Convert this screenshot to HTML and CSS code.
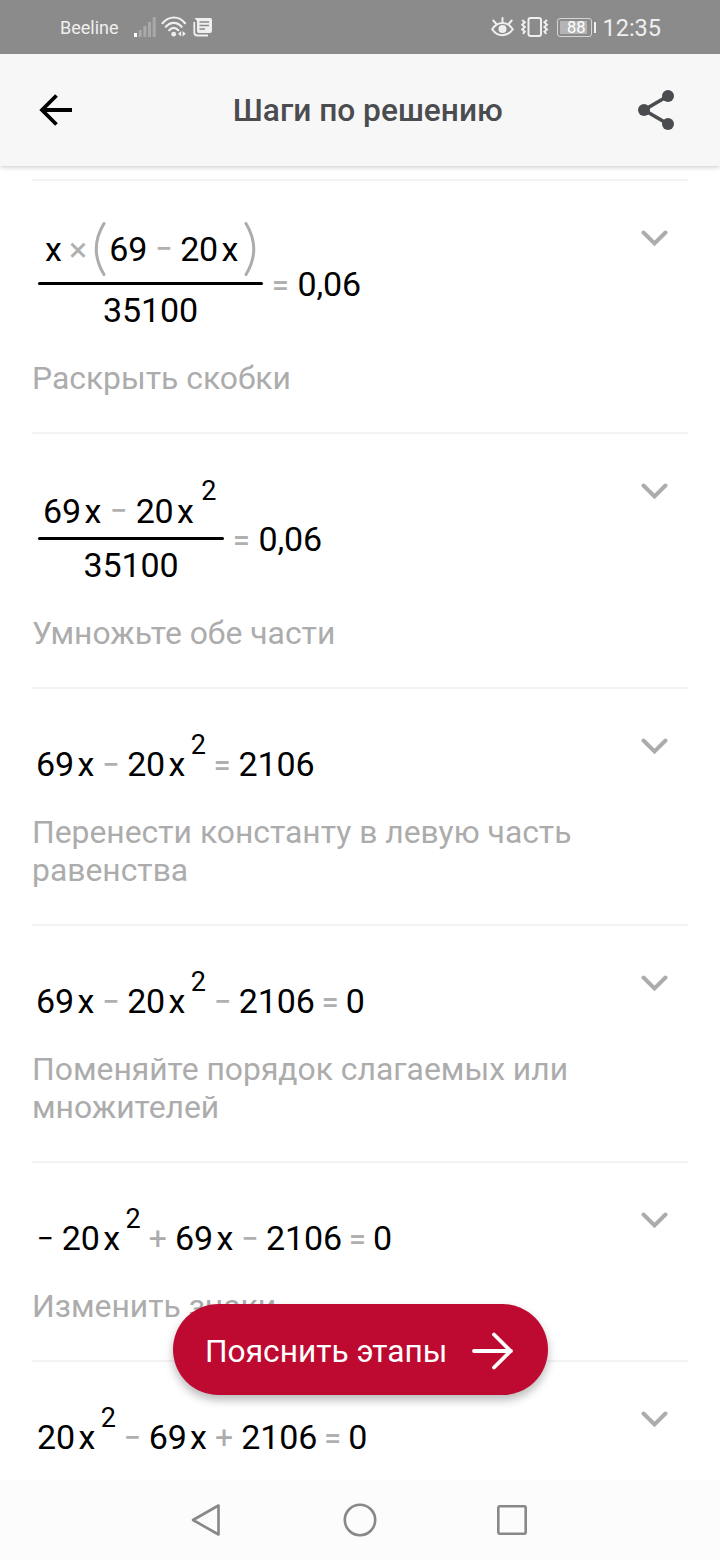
FILE: index.html
```
<!DOCTYPE html>
<html lang="ru">
<head>
    <meta charset="UTF-8">
    <meta name="viewport" content="width=device-width, initial-scale=1.0">
    <title>Шаги по решению</title>
    <link rel="stylesheet" href="styles.css">
</head>
<body>
    <div class="status-bar">
        <span class="carrier">Beeline</span>
        <svg class="signal" width="22" height="20" viewBox="0 0 22 20">
            <rect x="0" y="16" width="3" height="4" fill="#fff"/>
            <g fill="#a9a9a9">
                <rect x="4.7" y="13" width="3" height="7"/>
                <rect x="9.4" y="9" width="3" height="11"/>
                <rect x="14" y="5" width="3" height="15"/>
                <rect x="18.7" y="0" width="3" height="20"/>
            </g>
        </svg>
        <svg class="wifi" width="26" height="22" viewBox="0 0 26 22">
            <g fill="none" stroke="#efefef" stroke-width="2.2" stroke-linecap="round">
                <path d="M1.5 7.2C8 -.4 18 -.4 24 7.2"/>
                <path d="M4.8 10.8C9.5 5.6 16 5.6 20.7 10.8"/>
                <path d="M8.2 14.2C11 11.2 14.5 11.2 17.3 14.2"/>
            </g>
            <circle cx="12.7" cy="18.2" r="2.4" fill="#efefef"/>
            <path d="M20.2 15v5.6L17 17.8zM21.6 15v5.6l3.2-2.8z" fill="#efefef"/>
        </svg>
        <svg class="news" width="20" height="20" viewBox="0 0 20 20">
            <path d="M1.3 5v10.5a3 3 0 0 0 3 3H15" fill="none" stroke="#efefef" stroke-width="1.8"/>
            <path d="M1.5 1H17.5a1.5 1.5 0 0 1 1.5 1.5V14a2 2 0 0 1-2 2H6a2 2 0 0 1-2-2V4z" fill="#efefef"/>
            <path d="M6.5 5H16M6.5 8.5H16M6.5 12H12" stroke="#8b8b8b" stroke-width="1.5"/>
        </svg>
        <div class="status-right">
            <svg class="eye" width="23" height="20" viewBox="0 0 23 20">
                <g fill="none" stroke="#efefef" stroke-width="2" stroke-linecap="round">
                    <path d="M1.2 12.2C6.5 4 16.5 4 21.8 12.2C16.5 20.2 6.5 20.2 1.2 12.2z"/>
                    <path d="M11.5 5V1M5.3 7L2.3 3.5M17.7 7L20.7 3.5"/>
                </g>
                <circle cx="11.5" cy="12" r="4" fill="#efefef"/>
            </svg>
            <svg class="vibrate" width="28" height="20" viewBox="0 0 28 20">
                <g fill="none" stroke="#efefef" stroke-width="2">
                    <rect x="7.5" y="1" width="12.5" height="18" rx="2"/>
                    <path d="M1.2 3l2.6 2.3L1.2 7.7l2.6 2.4-2.6 2.3 2.6 2.3L2 17M26 3l-2.6 2.3L26 7.7l-2.6 2.4L26 12.4l-2.6 2.3L25.2 17"/>
                </g>
            </svg>
            <div class="battery"><span>88</span></div>
            <div class="battery-tip"></div>
            <span class="time">12:35</span>
        </div>
    </div>

    <div class="header">
        <svg width="34" height="34" viewBox="0 0 34 34">
            <path d="M17.5 2.5L3 17L17.5 31.5M3 17H33" fill="none" stroke="#000" stroke-width="3.8"/>
        </svg>
        <h1>Шаги по решению</h1>
        <svg width="38" height="42" viewBox="0 0 38 42">
            <path d="M31 7L7 21L31 35" fill="none" stroke="#4b4c50" stroke-width="3.6"/>
            <g fill="#4b4c50">
                <circle cx="31" cy="7" r="6"/>
                <circle cx="7" cy="21" r="6"/>
                <circle cx="31" cy="35" r="6"/>
            </g>
        </svg>
    </div>

    <div class="steps">
        <div class="step brackets">
            <div class="step-body">
                <div class="math fraction-row">
                    <div class="fraction">
                        <div class="numerator">
                            <span>x</span><span class="op times">×</span><svg class="paren" width="13" height="54" viewBox="0 0 13 54"><path d="M10 1.5Q-5.5 27 10 52.5" fill="none" stroke="#acacac" stroke-width="3" stroke-linecap="round"/></svg><span>69</span><span class="op minus">−</span><span>20</span><span class="var">x</span><svg class="paren close" width="13" height="54" viewBox="0 0 13 54"><path d="M3 1.5Q18.5 27 3 52.5" fill="none" stroke="#acacac" stroke-width="3" stroke-linecap="round"/></svg>
                        </div>
                        <div class="bar"></div>
                        <div class="denominator">35100</div>
                    </div>
                    <div class="result"><span class="op equals">=</span>0,06</div>
                </div>
                <p class="label">Раскрыть скобки</p>
            </div>
            <svg class="chevron" width="28" height="20" viewBox="0 0 28 20"><path d="M2.5 4.5L13.5 15.5L24.5 4.5"/></svg>
        </div>

        <div class="step power">
            <div class="step-body">
                <div class="math fraction-row">
                    <div class="fraction">
                        <div class="numerator">
                            <span>69</span><span class="var">x</span><span class="op minus">−</span><span>20</span><span class="var">x</span><sup>2</sup>
                        </div>
                        <div class="bar"></div>
                        <div class="denominator">35100</div>
                    </div>
                    <div class="result"><span class="op equals">=</span>0,06</div>
                </div>
                <p class="label">Умножьте обе части</p>
            </div>
            <svg class="chevron" width="28" height="20" viewBox="0 0 28 20"><path d="M2.5 4.5L13.5 15.5L24.5 4.5"/></svg>
        </div>

        <div class="step">
            <div class="step-body">
                <div class="math">
                    <span>69</span><span class="var">x</span><span class="op minus">−</span><span>20</span><span class="var">x</span><sup>2</sup><span class="op equals">=</span><span>2106</span>
                </div>
                <p class="label">Перенести константу в левую часть равенства</p>
            </div>
            <svg class="chevron" width="28" height="20" viewBox="0 0 28 20"><path d="M2.5 4.5L13.5 15.5L24.5 4.5"/></svg>
        </div>

        <div class="step">
            <div class="step-body">
                <div class="math">
                    <span>69</span><span class="var">x</span><span class="op minus">−</span><span>20</span><span class="var">x</span><sup>2</sup><span class="op minus">−</span><span>2106</span><span class="op equals">=</span><span>0</span>
                </div>
                <p class="label">Поменяйте порядок слагаемых или множителей</p>
            </div>
            <svg class="chevron" width="28" height="20" viewBox="0 0 28 20"><path d="M2.5 4.5L13.5 15.5L24.5 4.5"/></svg>
        </div>

        <div class="step">
            <div class="step-body">
                <div class="math">
                    <span class="op sign">−</span><span>20</span><span class="var">x</span><sup>2</sup><span class="op plus">+</span><span>69</span><span class="var">x</span><span class="op minus">−</span><span>2106</span><span class="op equals">=</span><span>0</span>
                </div>
                <p class="label">Изменить знаки</p>
            </div>
            <svg class="chevron" width="28" height="20" viewBox="0 0 28 20"><path d="M2.5 4.5L13.5 15.5L24.5 4.5"/></svg>
        </div>

        <div class="step">
            <div class="step-body">
                <div class="math last">
                    <span>20</span><span class="var">x</span><sup>2</sup><span class="op minus">−</span><span>69</span><span class="var">x</span><span class="op plus">+</span><span>2106</span><span class="op equals">=</span><span>0</span>
                </div>
            </div>
            <svg class="chevron" width="28" height="20" viewBox="0 0 28 20"><path d="M2.5 4.5L13.5 15.5L24.5 4.5"/></svg>
        </div>
    </div>

    <button class="explain" type="button">
        <span>Пояснить этапы</span>
        <svg width="42" height="40" viewBox="0 0 42 40">
            <path d="M2 20H39M22 3.5L38.5 20L22 36.5" fill="none" stroke="#fff" stroke-width="3.8" stroke-linecap="round"/>
        </svg>
    </button>

    <div class="nav-bar">
        <svg width="30" height="34" viewBox="0 0 30 34"><path d="M27.5 2.5V31.5L2 17z"/></svg>
        <svg class="home" width="34" height="34" viewBox="0 0 34 34"><circle cx="17" cy="17" r="15.2"/></svg>
        <svg width="32" height="32" viewBox="0 0 32 32"><rect x="2.3" y="2.3" width="27.4" height="27.4" rx="1.5"/></svg>
    </div>
</body>
</html>
```
FILE: styles.css
```
*{
    box-sizing: border-box;
}

body{
    margin: 0;
    width: 720px;
    height: 1560px;
    display: flex;
    flex-direction: column;
    position: relative;
    overflow: hidden;
    background-color: #fff;
    font-family: Roboto, sans-serif;
}

svg{
    display: block;
    flex: none;
}

/* status bar */
.status-bar{
    flex: none;
    height: 54px;
    display: flex;
    align-items: center;
    padding: 0 59px 0 60px;
    background-color: #8b8b8b;
    color: #efefef;
    z-index: 2;
}

.carrier{
    font-size: 18px;
    width: 74px;
    padding-top: 1px;
}

.wifi{
    margin-left: 5px;
}

.news{
    margin-left: 6px;
}

.status-right{
    display: flex;
    align-items: center;
    margin-left: auto;
}

.vibrate{
    margin-left: 7px;
}

.battery{
    width: 35px;
    height: 19px;
    margin-left: 8px;
    padding: 2px;
    border: 1px solid #d5d5d5;
    border-radius: 3px;
}

.battery span{
    display: block;
    width: 27px;
    height: 13px;
    padding-right: 2px;
    background-color: #b4b4b4;
    color: #fff;
    font-size: 16.5px;
    line-height: 14px;
    text-align: right;
}

.battery-tip{
    width: 2px;
    height: 11px;
    margin-left: 2px;
    background-color: #efefef;
}

.time{
    margin-left: 6px;
    padding-top: 2px;
    font-size: 23.5px;
}

/* header */
.header{
    flex: none;
    height: 112px;
    display: flex;
    align-items: center;
    padding: 0 45px 0 39px;
    background-color: #f7f7f7;
    box-shadow: 0 1px 5px rgba(0, 0, 0, .22);
    z-index: 1;
}

.header h1{
    flex: 1;
    margin: 0;
    padding-left: 25.5px;
    font-size: 31.7px;
    font-weight: 500;
    text-align: center;
    color: #4b4c50;
}

/* steps */
.steps{
    flex: 1;
    min-height: 0;
    overflow: hidden;
    padding: 13px 32px 0;
}

.step{
    display: flex;
    align-items: flex-start;
    justify-content: space-between;
    padding: 55px 0 35px;
    border-top: 2px solid #f3f3f3;
}

.step-body{
    width: 570px;
}

.chevron{
    margin: -8px 19px 0 0;
    fill: none;
    stroke: #acacac;
    stroke-width: 4;
    stroke-linecap: round;
}

.label{
    margin: 29px 0 0;
    font-size: 31.85px;
    line-height: 38px;
    color: #acacac;
}

/* expressions */
.math{
    height: 40px;
    padding-left: 4px;
    font-size: 34px;
    line-height: 40px;
    letter-spacing: -.15px;
    white-space: nowrap;
    color: #000;
}

.math.last{
    padding-left: 5px;
}

.var{
    margin-left: 3.5px;
}

sup{
    margin-left: 5.5px;
    font-size: 27px;
    line-height: 0;
    vertical-align: 22px;
}

.op{
    display: inline-block;
    font-size: 30px;
    font-weight: 500;
    line-height: 38px;
    vertical-align: 1px;
    text-align: center;
    color: #b0b0b0;
}

.op.minus{
    width: 33px;
}

.op.equals{
    width: 31px;
}

sup + .op.equals{
    width: 32.8px;
}

.op.plus{
    width: 34.5px;
    font-size: 32px;
    font-weight: 400;
    color: #acacac;
}

.op.sign{
    width: 25.8px;
    padding-right: 8px;
    font-weight: 400;
    color: #000;
}

.op.times{
    width: 32.5px;
    font-size: 34px;
    font-weight: 400;
}

.fraction-row{
    display: flex;
    align-items: flex-end;
    height: auto;
    padding-left: 6px;
}

.numerator{
    display: flex;
    height: 40px;
    padding-left: 5px;
}

.numerator .op{
    line-height: 40px;
}

.denominator{
    text-align: center;
}

.bar{
    height: 3px;
    margin: 6px 0 5.5px;
    border-radius: 2px;
    background-color: #000;
}

.result{
    margin-bottom: 26.5px;
}

.result .equals{
    width: 34.5px;
}

.brackets{
    padding-top: 47.5px;
}

.brackets .chevron{
    margin-top: -.5px;
}

.brackets .fraction{
    width: 225px;
}

.brackets .numerator{
    padding-left: 7px;
}

.brackets .bar{
    margin-top: 13px;
}

.paren{
    margin: -7px 2px 0 0;
}

.paren.close{
    margin: -7px 0 0 5px;
}

.power{
    padding-top: 56.5px;
}

.power .chevron{
    margin-top: -9.5px;
}

.power .fraction{
    width: 186px;
}

.power .minus{
    width: 34.5px;
}

.power sup{
    align-self: flex-start;
    margin-left: 7.5px;
    line-height: 40px;
    margin-top: -20px;
}

/* floating button */
.explain{
    position: absolute;
    left: 173px;
    top: 1304px;
    width: 375px;
    height: 91px;
    display: flex;
    align-items: center;
    justify-content: space-between;
    padding: 2px 34px 0 32px;
    border: none;
    border-radius: 46px;
    background-color: #be0a31;
    box-shadow: 0 5px 10px rgba(0, 0, 0, .28);
    color: #fff;
    font-family: inherit;
    font-size: 31.7px;
    z-index: 2;
}

.explain span{
    padding-top: 2px;
}

/* android buttons */
.nav-bar{
    flex: none;
    height: 80px;
    display: flex;
    align-items: center;
    justify-content: space-between;
    padding: 0 192px 0 191px;
    background-color: #fcfcfc;
}

.nav-bar svg{
    fill: none;
    stroke: #888;
    stroke-width: 2.6;
    stroke-linejoin: round;
}

.nav-bar .home{
    margin-left: 3px;
}
```
